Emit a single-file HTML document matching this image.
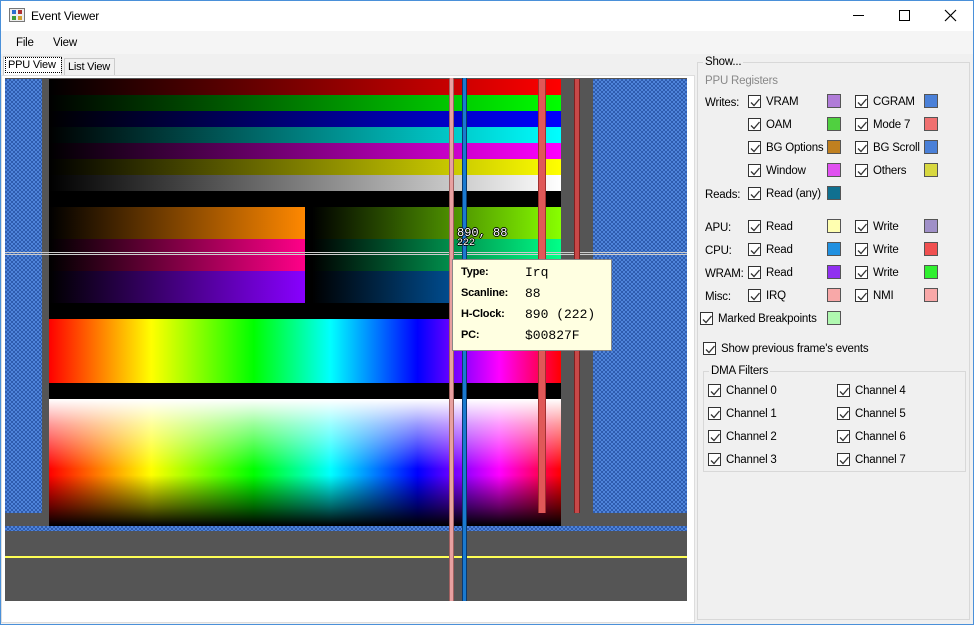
<!DOCTYPE html>
<html><head><meta charset="utf-8"><style>
*{margin:0;padding:0;box-sizing:border-box}
body{width:974px;height:625px;background:#f0f0f0;font-family:"Liberation Sans",sans-serif;font-size:11.5px;color:#000;position:relative;overflow:hidden}
.a{position:absolute}
.t{position:absolute;white-space:nowrap;line-height:14px;letter-spacing:-0.2px}
.cb{position:absolute;width:13px;height:13px;border:1px solid #333;background:#fff}
.cb svg{position:absolute;left:0;top:0}
.sw{position:absolute;width:14px;height:14px;border:1px solid #555}
.chk{background:repeating-conic-gradient(#4f84da 0 25%,#2f5cae 0 50%) 0 0/4px 4px}
.mono{font-family:"Liberation Mono",monospace;letter-spacing:0}
</style></head><body>
<div class="a" style="left:0;top:0;width:974px;height:625px;border:1px solid #4a90d9"></div>
<div class="a" style="left:1px;top:1px;width:972px;height:30px;background:#fff"></div>
<div class="a" style="left:9px;top:8px;width:16px;height:14px;border:1px solid #777;background:#eee"></div>
<div class="a" style="left:12px;top:10px;width:4px;height:4px;background:#2a6ed0"></div>
<div class="a" style="left:18px;top:10px;width:4px;height:4px;background:#b03030"></div>
<div class="a" style="left:12px;top:16px;width:4px;height:4px;background:#3a9a3a"></div>
<div class="a" style="left:18px;top:16px;width:4px;height:4px;background:#d0a030"></div>
<div class="t" style="left:31px;top:9px;font-size:12px">Event Viewer</div>
<div class="a" style="left:853px;top:15px;width:11px;height:1px;background:#000"></div>
<div class="a" style="left:899px;top:10px;width:11px;height:11px;border:1px solid #000"></div>
<svg class="a" style="left:944px;top:9px" width="13" height="13"><path d="M1 1L12 12M12 1L1 12" stroke="#000" stroke-width="1.2"/></svg>
<div class="a" style="left:1px;top:31px;width:972px;height:23px;background:#f5f5f5"></div>
<div class="t" style="left:16px;top:36px">File</div>
<div class="t" style="left:53px;top:36px">View</div>
<div class="a" style="left:3px;top:56px;width:59px;height:19px;background:#fff;border:1px solid #ccc;border-bottom:none"></div>
<div class="a" style="left:5px;top:57px;width:57px;height:16px;border:1px dotted #000"></div>
<div class="t" style="left:8px;top:58px;font-size:11px">PPU View</div>
<div class="a" style="left:64px;top:58px;width:51px;height:17px;background:#f0f0f0;border:1px solid #ccc;border-bottom:none"></div>
<div class="t" style="left:68px;top:60px;font-size:11px">List View</div>
<div class="a" style="left:1px;top:75px;width:694px;height:548px;background:#fff;border:1px solid #ddd"></div>
<div class="a" style="left:5px;top:78px;width:682px;height:523px;background:#555"></div>
<div class="a chk" style="left:5px;top:79px;width:37px;height:434px"></div>
<div class="a chk" style="left:593px;top:79px;width:94px;height:434px"></div>
<div class="a" style="left:49px;top:79px;width:512px;height:447px;background:#000"></div>
<div class="a" style="left:49px;top:79px;width:512px;height:16px;background:linear-gradient(90deg,#000,#f00)"></div>
<div class="a" style="left:49px;top:95px;width:512px;height:16px;background:linear-gradient(90deg,#000,#0f0)"></div>
<div class="a" style="left:49px;top:111px;width:512px;height:16px;background:linear-gradient(90deg,#000,#00f)"></div>
<div class="a" style="left:49px;top:127px;width:512px;height:16px;background:linear-gradient(90deg,#000,#0ff)"></div>
<div class="a" style="left:49px;top:143px;width:512px;height:16px;background:linear-gradient(90deg,#000,#f0f)"></div>
<div class="a" style="left:49px;top:159px;width:512px;height:16px;background:linear-gradient(90deg,#000,#ff0)"></div>
<div class="a" style="left:49px;top:175px;width:512px;height:16px;background:linear-gradient(90deg,#000,#fff)"></div>
<div class="a" style="left:49px;top:207px;width:256px;height:32px;background:linear-gradient(90deg,#000,#f80)"></div>
<div class="a" style="left:49px;top:239px;width:256px;height:32px;background:linear-gradient(90deg,#000,#f08)"></div>
<div class="a" style="left:49px;top:271px;width:256px;height:32px;background:linear-gradient(90deg,#000,#80f)"></div>
<div class="a" style="left:312px;top:207px;width:249px;height:32px;background:linear-gradient(90deg,#000,#8f0)"></div>
<div class="a" style="left:312px;top:239px;width:249px;height:32px;background:linear-gradient(90deg,#000,#0f8)"></div>
<div class="a" style="left:312px;top:271px;width:249px;height:32px;background:linear-gradient(90deg,#000,#08f)"></div>
<div class="a" style="left:49px;top:319px;width:512px;height:64px;background:linear-gradient(90deg,#f00,#ff0 20%,#0f0 40%,#0ff 55%,#00f 72%,#f0f 88%,#f00)"></div>
<div class="a" style="left:49px;top:399px;width:512px;height:127px;background:linear-gradient(180deg,#fff,rgba(255,255,255,.6) 20%,rgba(255,255,255,0) 55%,rgba(0,0,0,0) 60%,rgba(0,0,0,.6) 85%,#000),linear-gradient(90deg,#f00,#ff0 20%,#0f0 40%,#0ff 55%,#00f 72%,#f0f 88%,#f00)"></div>
<div class="a chk" style="left:5px;top:526px;width:682px;height:5px"></div>
<div class="a" style="left:5px;top:556px;width:682px;height:2px;background:#ff5"></div>
<div class="a" style="left:5px;top:252px;width:682px;height:3px;border-top:1px solid #ccc;border-bottom:1px solid #ccc"></div>
<div class="a" style="left:449px;top:78px;width:5px;height:523px;background:#e8a0a0;border-left:1px solid #a06060;border-right:1px solid #a06060"></div>
<div class="a" style="left:462px;top:78px;width:5px;height:523px;background:#1a7ad0;border-left:1px solid #0a3a70;border-right:1px solid #0a3a70"></div>
<div class="a" style="left:538px;top:79px;width:8px;height:434px;background:#e05858;border-left:1px solid #a03030;border-right:1px solid #a03030"></div>
<div class="a" style="left:574px;top:79px;width:6px;height:434px;background:#c84848;border-left:1px solid #802020;border-right:1px solid #802020"></div>
<div class="t mono" style="left:457px;top:228px;color:#fff;font-size:12px;line-height:11px;text-shadow:1px 0 #000,-1px 0 #000,0 1px #000,0 -1px #000">890, 88</div>
<div class="t mono" style="left:457px;top:239px;color:#fff;font-size:10px;line-height:10px;text-shadow:1px 0 #000,-1px 0 #000,0 1px #000,0 -1px #000">222</div>
<div class="a" style="left:452px;top:259px;width:160px;height:92px;background:#ffffe1;border:1px solid #888"></div>
<div class="t" style="left:461px;top:265px;font-weight:bold;font-size:11px">Type:</div>
<div class="t" style="left:461px;top:286px;font-weight:bold;font-size:11px">Scanline:</div>
<div class="t" style="left:461px;top:307px;font-weight:bold;font-size:11px">H-Clock:</div>
<div class="t" style="left:461px;top:328px;font-weight:bold;font-size:11px">PC:</div>
<div class="t mono" style="left:525px;top:266px;font-size:13px">Irq</div>
<div class="t mono" style="left:525px;top:287px;font-size:13px">88</div>
<div class="t mono" style="left:525px;top:308px;font-size:13px">890 (222)</div>
<div class="t mono" style="left:525px;top:329px;font-size:13px">$00827F</div>
<div class="a" style="left:697px;top:62px;width:273px;height:558px;border:1px solid #d8d8d8"></div>
<div class="t" style="left:703px;top:55px;background:#f0f0f0;padding:0 2px">Show...</div>
<div class="t" style="left:705px;top:74px;color:#888">PPU Registers</div>
<div class="t" style="left:705px;top:96px">Writes:</div>
<div class="t" style="left:705px;top:188px">Reads:</div>
<div class="t" style="left:705px;top:221px">APU:</div>
<div class="t" style="left:705px;top:244px">CPU:</div>
<div class="t" style="left:705px;top:267px">WRAM:</div>
<div class="t" style="left:705px;top:290px">Misc:</div>
<svg width="0" height="0" style="position:absolute"><defs><path id="ck" d="M2 6.5L5 9.5L10.5 3" fill="none" stroke="#333" stroke-width="1.3"/></defs></svg>
<div class="cb" style="left:748px;top:95px"><svg width="13" height="13"><use href="#ck"/></svg></div><div class="t" style="left:766px;top:95px">VRAM</div><div class="sw" style="left:827px;top:94px;background:#b07cd8"></div>
<div class="cb" style="left:855px;top:95px"><svg width="13" height="13"><use href="#ck"/></svg></div><div class="t" style="left:873px;top:95px">CGRAM</div><div class="sw" style="left:924px;top:94px;background:#4a80d8"></div>
<div class="cb" style="left:748px;top:118px"><svg width="13" height="13"><use href="#ck"/></svg></div><div class="t" style="left:766px;top:118px">OAM</div><div class="sw" style="left:827px;top:117px;background:#50d040"></div>
<div class="cb" style="left:855px;top:118px"><svg width="13" height="13"><use href="#ck"/></svg></div><div class="t" style="left:873px;top:118px">Mode 7</div><div class="sw" style="left:924px;top:117px;background:#f07070"></div>
<div class="cb" style="left:748px;top:141px"><svg width="13" height="13"><use href="#ck"/></svg></div><div class="t" style="left:766px;top:141px">BG Options</div><div class="sw" style="left:827px;top:140px;background:#c08020"></div>
<div class="cb" style="left:855px;top:141px"><svg width="13" height="13"><use href="#ck"/></svg></div><div class="t" style="left:873px;top:141px">BG Scroll</div><div class="sw" style="left:924px;top:140px;background:#4a80d8"></div>
<div class="cb" style="left:748px;top:164px"><svg width="13" height="13"><use href="#ck"/></svg></div><div class="t" style="left:766px;top:164px">Window</div><div class="sw" style="left:827px;top:163px;background:#e050f0"></div>
<div class="cb" style="left:855px;top:164px"><svg width="13" height="13"><use href="#ck"/></svg></div><div class="t" style="left:873px;top:164px">Others</div><div class="sw" style="left:924px;top:163px;background:#d8d840"></div>
<div class="cb" style="left:748px;top:187px"><svg width="13" height="13"><use href="#ck"/></svg></div><div class="t" style="left:766px;top:187px">Read (any)</div><div class="sw" style="left:827px;top:186px;background:#107090"></div>
<div class="cb" style="left:748px;top:220px"><svg width="13" height="13"><use href="#ck"/></svg></div><div class="t" style="left:766px;top:220px">Read</div><div class="sw" style="left:827px;top:219px;background:#ffffb0"></div>
<div class="cb" style="left:855px;top:220px"><svg width="13" height="13"><use href="#ck"/></svg></div><div class="t" style="left:873px;top:220px">Write</div><div class="sw" style="left:924px;top:219px;background:#a090c8"></div>
<div class="cb" style="left:748px;top:243px"><svg width="13" height="13"><use href="#ck"/></svg></div><div class="t" style="left:766px;top:243px">Read</div><div class="sw" style="left:827px;top:242px;background:#2090e0"></div>
<div class="cb" style="left:855px;top:243px"><svg width="13" height="13"><use href="#ck"/></svg></div><div class="t" style="left:873px;top:243px">Write</div><div class="sw" style="left:924px;top:242px;background:#f05050"></div>
<div class="cb" style="left:748px;top:266px"><svg width="13" height="13"><use href="#ck"/></svg></div><div class="t" style="left:766px;top:266px">Read</div><div class="sw" style="left:827px;top:265px;background:#9030f0"></div>
<div class="cb" style="left:855px;top:266px"><svg width="13" height="13"><use href="#ck"/></svg></div><div class="t" style="left:873px;top:266px">Write</div><div class="sw" style="left:924px;top:265px;background:#30f030"></div>
<div class="cb" style="left:748px;top:289px"><svg width="13" height="13"><use href="#ck"/></svg></div><div class="t" style="left:766px;top:289px">IRQ</div><div class="sw" style="left:827px;top:288px;background:#f8a8a8"></div>
<div class="cb" style="left:855px;top:289px"><svg width="13" height="13"><use href="#ck"/></svg></div><div class="t" style="left:873px;top:289px">NMI</div><div class="sw" style="left:924px;top:288px;background:#f8a8a8"></div>
<div class="cb" style="left:700px;top:312px"><svg width="13" height="13"><use href="#ck"/></svg></div><div class="t" style="left:718px;top:312px">Marked Breakpoints</div><div class="sw" style="left:827px;top:311px;background:#b0f8b0"></div>
<div class="cb" style="left:703px;top:342px"><svg width="13" height="13"><use href="#ck"/></svg></div><div class="t" style="left:721px;top:342px">Show previous frame's events</div>
<div class="a" style="left:703px;top:371px;width:263px;height:101px;border:1px solid #d8d8d8"></div>
<div class="t" style="left:709px;top:364px;background:#f0f0f0;padding:0 2px">DMA Filters</div>
<div class="cb" style="left:708px;top:384px"><svg width="13" height="13"><use href="#ck"/></svg></div><div class="t" style="left:726px;top:384px">Channel 0</div>
<div class="cb" style="left:708px;top:407px"><svg width="13" height="13"><use href="#ck"/></svg></div><div class="t" style="left:726px;top:407px">Channel 1</div>
<div class="cb" style="left:708px;top:430px"><svg width="13" height="13"><use href="#ck"/></svg></div><div class="t" style="left:726px;top:430px">Channel 2</div>
<div class="cb" style="left:708px;top:453px"><svg width="13" height="13"><use href="#ck"/></svg></div><div class="t" style="left:726px;top:453px">Channel 3</div>
<div class="cb" style="left:837px;top:384px"><svg width="13" height="13"><use href="#ck"/></svg></div><div class="t" style="left:855px;top:384px">Channel 4</div>
<div class="cb" style="left:837px;top:407px"><svg width="13" height="13"><use href="#ck"/></svg></div><div class="t" style="left:855px;top:407px">Channel 5</div>
<div class="cb" style="left:837px;top:430px"><svg width="13" height="13"><use href="#ck"/></svg></div><div class="t" style="left:855px;top:430px">Channel 6</div>
<div class="cb" style="left:837px;top:453px"><svg width="13" height="13"><use href="#ck"/></svg></div><div class="t" style="left:855px;top:453px">Channel 7</div>
</body></html>
